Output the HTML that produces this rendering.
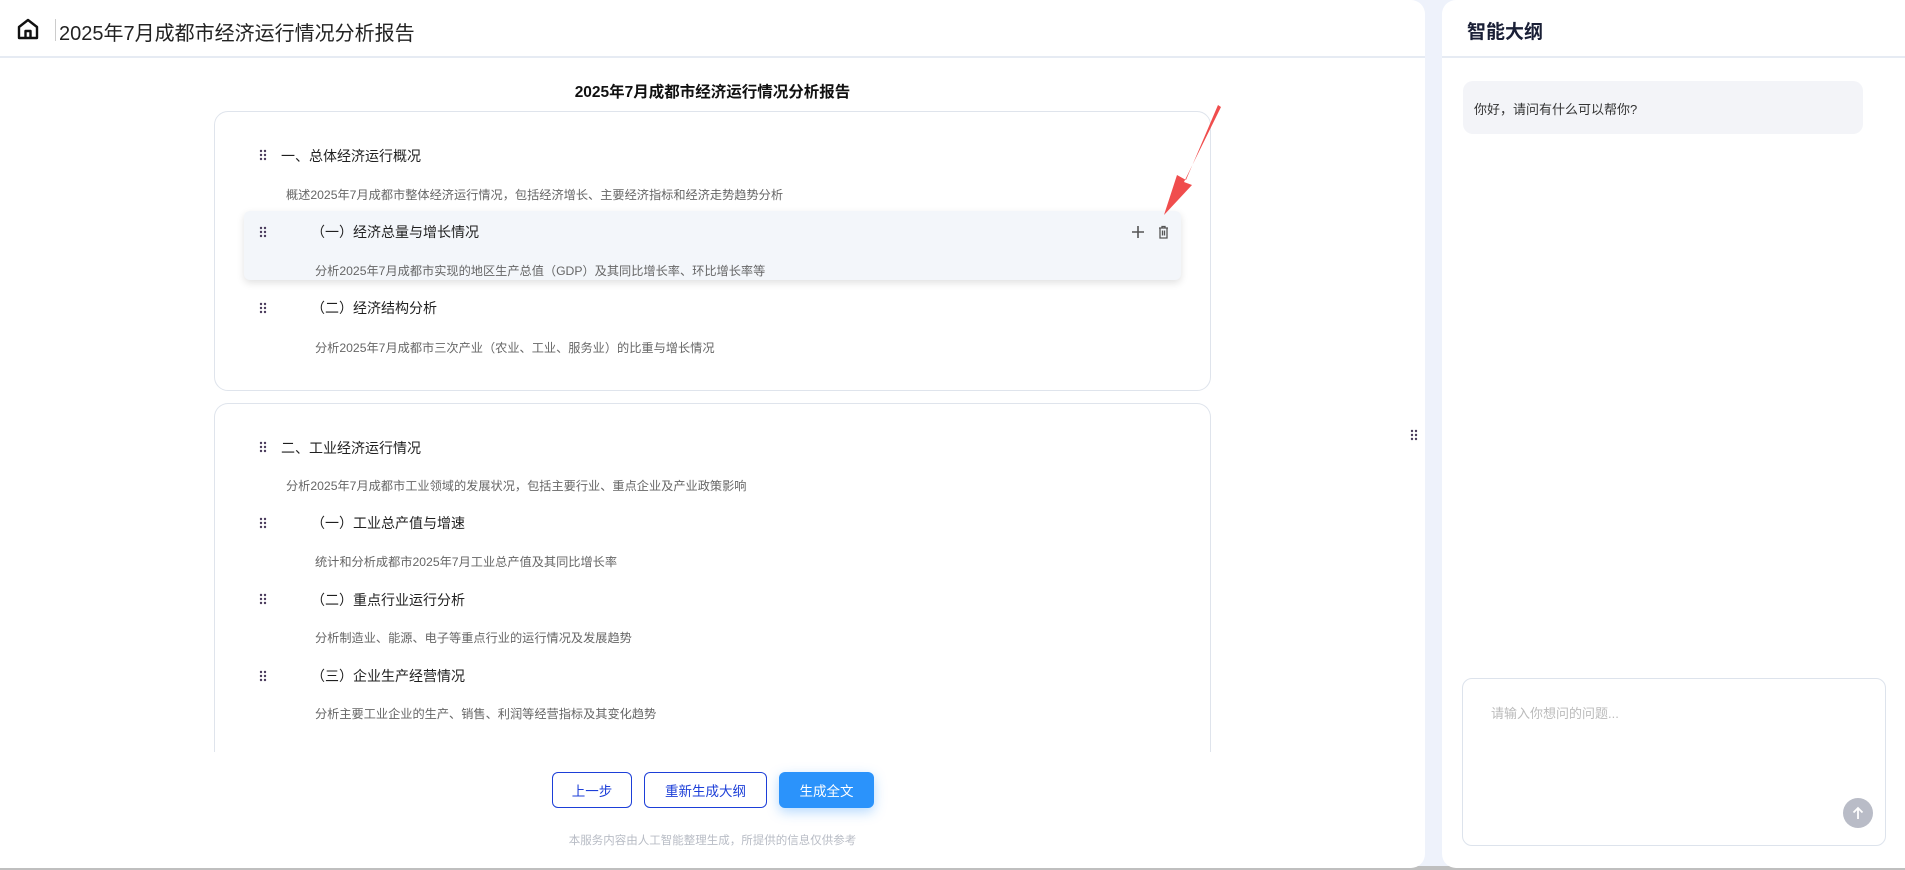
<!DOCTYPE html>
<html><head><meta charset="utf-8"><style>
*{box-sizing:border-box;margin:0;padding:0}
body{width:1905px;height:870px;overflow:hidden;background:#eef2fb;font-family:"Liberation Sans","Noto Sans CJK SC",sans-serif;position:relative;color:#222}
.abs{position:absolute}
.left{left:0;top:0;width:1425px;height:868px;background:#fff;border-radius:0 14px 14px 0}
.right{left:1442px;top:0;width:463px;height:868px;background:#fff;border-radius:14px 0 0 14px}
.hline{height:2px;background:#e6ebf3}
.card{border:1px solid #dfe4ec;border-radius:14px;background:#fff}
.h{font-size:14px;color:#1f1f1f;white-space:nowrap}
.d{font-size:12.2px;color:#666;white-space:nowrap}
.dots{width:8px;height:12px}
.btn{height:36px;border-radius:6px;font-size:13.5px;display:flex;align-items:center;justify-content:center}
</style></head><body>
<div class="abs" style="left:0;top:866px;width:1905px;height:4px;background:#bfbfbf"></div>
<div class="abs left"></div>
<div class="abs right"></div>
<svg class="abs" style="left:16px;top:17px" width="24" height="24" viewBox="0 0 24 24" fill="none" stroke="#111" stroke-width="2.4" stroke-linejoin="round"><path d="M3 10 L12 3 L21 10 V21 H3 Z"/><path d="M9.5 21 V14 H14.5 V21"/></svg>
<div class="abs" style="left:55px;top:19px;width:1px;height:22px;background:#ccc"></div>
<div class="abs" style="left:59px;top:17px;font-size:20px;color:#222">2025年7月成都市经济运行情况分析报告</div>
<div class="abs hline" style="left:0;top:56px;width:1425px"></div>
<div class="abs" style="left:0;top:80px;width:1425px;text-align:center;font-size:15.5px;font-weight:bold;color:#111">2025年7月成都市经济运行情况分析报告</div>
<div class="abs card" style="left:214px;top:111px;width:997px;height:280px"></div>
<div class="abs card" style="left:214px;top:403px;width:997px;height:400px;border-bottom:none;border-radius:14px 14px 0 0"></div>
<div class="abs" style="left:0;top:752px;width:1425px;height:60px;background:#fff"></div>
<div class="abs" style="left:244px;top:211px;width:937px;height:69px;background:#f3f6fa;border-radius:6px;box-shadow:0 3px 8px rgba(0,0,0,.12)"></div>

<svg width="0" height="0" style="position:absolute"><defs><g id="dt" fill="#4a3b5c"><circle cx="2" cy="2" r="1.2"/><circle cx="6" cy="2" r="1.2"/><circle cx="2" cy="6" r="1.2"/><circle cx="6" cy="6" r="1.2"/><circle cx="2" cy="10" r="1.2"/><circle cx="6" cy="10" r="1.2"/></g></defs></svg>

<svg class="abs dots" style="left:259px;top:149px"><use href="#dt"/></svg>
<div class="abs h" style="left:281px;top:146px">一、总体经济运行概况</div>
<div class="abs d" style="left:286px;top:185px">概述2025年7月成都市整体经济运行情况，包括经济增长、主要经济指标和经济走势趋势分析</div>
<svg class="abs dots" style="left:259px;top:226px"><use href="#dt"/></svg>
<div class="abs h" style="left:311px;top:222px">（一）经济总量与增长情况</div>
<div class="abs d" style="left:315px;top:261px">分析2025年7月成都市实现的地区生产总值（GDP）及其同比增长率、环比增长率等</div>
<svg class="abs" style="left:1131px;top:225px" width="14" height="14" viewBox="0 0 14 14" stroke="#555" stroke-width="1.6"><path d="M7 1V13M1 7H13"/></svg>
<svg class="abs" style="left:1158px;top:225px" width="11" height="14" viewBox="0 0 11 14" fill="none" stroke="#555" stroke-width="1.3"><path d="M1 3H10M4 3V1.5H7V3M2 3V13H9V3M4.5 5.5V10.5M6.5 5.5V10.5"/></svg>
<svg class="abs dots" style="left:259px;top:302px"><use href="#dt"/></svg>
<div class="abs h" style="left:311px;top:298px">（二）经济结构分析</div>
<div class="abs d" style="left:315px;top:338px">分析2025年7月成都市三次产业（农业、工业、服务业）的比重与增长情况</div>

<svg class="abs dots" style="left:259px;top:441px"><use href="#dt"/></svg>
<div class="abs h" style="left:281px;top:438px">二、工业经济运行情况</div>
<div class="abs d" style="left:286px;top:476px">分析2025年7月成都市工业领域的发展状况，包括主要行业、重点企业及产业政策影响</div>
<svg class="abs dots" style="left:259px;top:517px"><use href="#dt"/></svg>
<div class="abs h" style="left:311px;top:513px">（一）工业总产值与增速</div>
<div class="abs d" style="left:315px;top:552px">统计和分析成都市2025年7月工业总产值及其同比增长率</div>
<svg class="abs dots" style="left:259px;top:593px"><use href="#dt"/></svg>
<div class="abs h" style="left:311px;top:590px">（二）重点行业运行分析</div>
<div class="abs d" style="left:315px;top:628px">分析制造业、能源、电子等重点行业的运行情况及发展趋势</div>
<svg class="abs dots" style="left:259px;top:670px"><use href="#dt"/></svg>
<div class="abs h" style="left:311px;top:666px">（三）企业生产经营情况</div>
<div class="abs d" style="left:315px;top:704px">分析主要工业企业的生产、销售、利润等经营指标及其变化趋势</div>

<svg class="abs" style="left:1150px;top:100px" width="80" height="125" viewBox="0 0 80 125"><path d="M68 5 L36 80 L27 75 L14 115 L42 85 L34 82 L71 7 Z" fill="#f04d4d"/></svg>

<div class="abs btn" style="left:552px;top:772px;width:80px;border:1px solid #1d3fd8;color:#1d3fd8">上一步</div>
<div class="abs btn" style="left:644px;top:772px;width:123px;border:1px solid #1d3fd8;color:#1d3fd8">重新生成大纲</div>
<div class="abs btn" style="left:779px;top:772px;width:95px;background:#2b93fb;color:#fff;box-shadow:0 4px 12px rgba(43,147,251,.35)">生成全文</div>
<div class="abs" style="left:0;top:832px;width:1425px;text-align:center;font-size:11.5px;color:#b8bcc5">本服务内容由人工智能整理生成，所提供的信息仅供参考</div>

<svg class="abs dots" style="left:1410px;top:429px"><use href="#dt"/></svg>

<div class="abs" style="left:1467px;top:17px;font-size:19px;font-weight:bold;color:#1a1f36">智能大纲</div>
<div class="abs hline" style="left:1442px;top:56px;width:463px"></div>
<div class="abs" style="left:1463px;top:81px;width:400px;height:53px;background:#f3f4f8;border-radius:10px"></div>
<div class="abs" style="left:1474px;top:99px;font-size:13px;color:#333">你好，请问有什么可以帮你?</div>
<div class="abs" style="left:1462px;top:678px;width:424px;height:168px;border:1px solid #dde3ec;border-radius:10px"></div>
<div class="abs" style="left:1491px;top:703px;font-size:13px;color:#bbb">请输入你想问的问题...</div>
<div class="abs" style="left:1843px;top:798px;width:30px;height:30px;border-radius:50%;background:#b9bcc7"></div>
<svg class="abs" style="left:1850px;top:805px" width="16" height="16" viewBox="0 0 16 16" fill="none" stroke="#fff" stroke-width="1.8"><path d="M8 14V3M3.5 7.5L8 3L12.5 7.5"/></svg>
</body></html>
